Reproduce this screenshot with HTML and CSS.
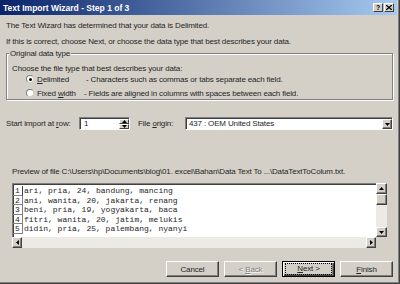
FILE: index.html
```html
<!DOCTYPE html>
<html lang="en">

<head>
    <meta charset="UTF-8">
    <title>Text Import Wizard - Step 1 of 3</title>
    <link rel="stylesheet" href="styles.css">
</head>

<body>
    <div class="window">
        <div class="titlebar">
            <span class="title">Text Import Wizard - Step 1 of 3</span>
            <div class="caption-buttons">
                <span class="caption-btn">?</span>
                <span class="caption-btn">
                    <svg width="6" height="5" viewBox="0 0 6 5"><path d="M0 0 L6 5 M6 0 L0 5" stroke="#000" stroke-width="1.3" /></svg>
                </span>
            </div>
        </div>

        <div class="dialog">
            <p class="intro">The Text Wizard has determined that your data is Delimited.</p>
            <p class="intro second">If this is correct, choose Next, or choose the data type that best describes your data.</p>

            <fieldset class="group">
                <legend>Original data type</legend>
                <p class="group-text">Choose the file type that best describes your data:</p>
                <div class="radio-row">
                    <span class="radio checked"></span>
                    <span class="radio-label"><u>D</u>elimited</span>
                    <span class="radio-desc">- Characters such as commas or tabs separate each field.</span>
                </div>
                <div class="radio-row fixed">
                    <span class="radio"></span>
                    <span class="radio-label">Fixed <u>w</u>idth</span>
                    <span class="radio-desc">- Fields are aligned in columns with spaces between each field.</span>
                </div>
            </fieldset>

            <div class="import-row">
                <span class="row-label">Start import at <u>r</u>ow:</span>
                <div class="spin sunken">
                    <span class="spin-value">1</span>
                    <div class="spin-buttons">
                        <span class="raised mini"><svg width="5" height="3" viewBox="0 0 5 3"><path d="M2.5 0 L5 3 L0 3z" /></svg></span>
                        <span class="raised mini"><svg width="5" height="3" viewBox="0 0 5 3"><path d="M0 0 L5 0 L2.5 3z" /></svg></span>
                    </div>
                </div>
                <span class="origin-label">File <u>o</u>rigin:</span>
                <div class="combo sunken">
                    <span class="combo-value">437 : OEM United States</span>
                    <span class="raised combo-btn"><svg width="5" height="3" viewBox="0 0 5 3"><path d="M0 0 L5 0 L2.5 3z" /></svg></span>
                </div>
            </div>

            <p class="preview-label">Preview of file C:&#92;Users&#92;hp&#92;Documents&#92;blog&#92;01. excel&#92;Bahan&#92;Data Text To ...&#92;DataTextToColum.txt.</p>

            <div class="preview">
                <div class="preview-main">
                    <div class="preview-rows">
                        <div class="prow"><span class="rownum first">1</span><span class="rowtext">ari, pria, 24, bandung, mancing</span></div>
                        <div class="prow"><span class="rownum">2</span><span class="rowtext">ani, wanita, 20, jakarta, renang</span></div>
                        <div class="prow"><span class="rownum">3</span><span class="rowtext">beni, pria, 19, yogyakarta, baca</span></div>
                        <div class="prow"><span class="rownum">4</span><span class="rowtext">fitri, wanita, 20, jatim, melukis</span></div>
                        <div class="prow"><span class="rownum">5</span><span class="rowtext">didin, pria, 25, palembang, nyanyi</span></div>
                    </div>
                    <div class="vscroll">
                        <span class="raised sbtn"><svg width="5" height="3" viewBox="0 0 5 3"><path d="M2.5 0 L5 3 L0 3z" /></svg></span>
                        <span class="raised thumb"></span>
                        <span class="track"></span>
                        <span class="raised sbtn"><svg width="5" height="3" viewBox="0 0 5 3"><path d="M0 0 L5 0 L2.5 3z" /></svg></span>
                    </div>
                </div>
                <div class="hscroll-row">
                    <div class="hscroll">
                        <span class="raised sbtn"><svg width="3" height="5" viewBox="0 0 3 5"><path d="M0 2.5 L3 0 L3 5z" /></svg></span>
                        <span class="track"></span>
                        <span class="raised sbtn"><svg width="3" height="5" viewBox="0 0 3 5"><path d="M0 0 L3 2.5 L0 5z" /></svg></span>
                    </div>
                    <div class="corner"></div>
                </div>
            </div>

            <div class="buttons">
                <button type="button" class="btn">Cancel</button>
                <button type="button" class="btn" disabled>&lt; <u>B</u>ack</button>
                <button type="button" class="btn default"><span class="focus"><u>N</u>ext &gt;</span></button>
                <button type="button" class="btn"><u>F</u>inish</button>
            </div>
        </div>
    </div>
</body>

</html>
```

FILE: styles.css
```css
:root {
    --face-color: #d4d0c8;
    --shadow-color: #808080;
    --dark-color: #404040;
    --light-color: #ffffff;
    --text-color: #262626;
    --track-color: #eceae5;
}

body {
    margin: 0;
    font-family: "Liberation Sans", Arial, sans-serif;
    font-size: 8px;
    letter-spacing: -0.15px;
    color: var(--text-color);
    background: var(--face-color);
}

.window {
    width: 400px;
    height: 284px;
    box-sizing: border-box;
    display: flex;
    flex-direction: column;
    padding: 0 2px 2px 0;
    background: var(--face-color);
    border-right: 1px solid var(--dark-color);
    border-bottom: 1px solid var(--dark-color);
    box-shadow: inset -1px -1px var(--shadow-color);
}

.titlebar {
    height: 15px;
    flex-shrink: 0;
    display: flex;
    align-items: center;
    justify-content: space-between;
    padding: 0 3px;
    background: linear-gradient(to right, #0a246a, #a6caf0);
}

.title {
    color: var(--light-color);
    font-weight: bold;
    font-size: 8.5px;
    letter-spacing: 0;
}

.caption-buttons {
    display: flex;
    gap: 1px;
}

.caption-btn {
    width: 10px;
    height: 9px;
    box-sizing: border-box;
    display: flex;
    align-items: center;
    justify-content: center;
    background: var(--face-color);
    border: 1px solid;
    border-color: var(--light-color) var(--dark-color) var(--dark-color) var(--light-color);
    font-weight: bold;
    font-size: 7px;
    line-height: 7px;
    color: #000;
}

.dialog {
    flex: 1;
    padding: 5px 4px 0 6px;
}

.intro {
    margin: 0;
    line-height: 11px;
}

.intro.second {
    margin-top: 5px;
}

/* group box */

.group {
    margin: 1px 0 0;
    padding: 5px 0 1px 5px;
    border: 1px solid var(--shadow-color);
    box-shadow: inset 1px 1px var(--light-color), 1px 1px var(--light-color);
}

.group legend {
    margin-left: -3px;
    padding: 0 1px;
    line-height: 11px;
    background: var(--face-color);
}

.group-text {
    margin: 0;
    line-height: 10px;
}

.radio-row {
    display: flex;
    align-items: center;
    height: 10px;
    margin-left: 14px;
}

.radio-row.fixed {
    margin-top: 4px;
}

.radio {
    width: 8px;
    height: 8px;
    box-sizing: border-box;
    display: flex;
    align-items: center;
    justify-content: center;
    border-radius: 50%;
    background: var(--light-color);
    border: 1px solid;
    border-color: var(--shadow-color) var(--face-color) var(--face-color) var(--shadow-color);
}

.radio.checked::after {
    content: "";
    width: 3px;
    height: 3px;
    border-radius: 50%;
    background: #000;
}

.radio-label {
    width: 49px;
    margin-left: 3px;
}

.fixed .radio-label {
    width: 47px;
}

/* start row / origin */

.import-row {
    display: flex;
    align-items: center;
    height: 13px;
    margin-top: 17px;
}

.row-label {
    width: 73px;
}

.sunken {
    height: 13px;
    box-sizing: border-box;
    display: flex;
    align-items: center;
    justify-content: space-between;
    background: var(--light-color);
    border: 1px solid;
    border-color: var(--shadow-color) var(--light-color) var(--light-color) var(--shadow-color);
    box-shadow: inset 1px 1px var(--dark-color);
}

.raised {
    box-sizing: border-box;
    display: flex;
    align-items: center;
    justify-content: center;
    background: var(--face-color);
    border: 1px solid;
    border-color: var(--light-color) var(--dark-color) var(--dark-color) var(--light-color);
    box-shadow: inset -1px -1px var(--shadow-color);
}

.spin {
    width: 51px;
    padding-left: 4px;
}

.spin-buttons {
    display: flex;
    flex-direction: column;
    align-self: stretch;
    width: 10px;
    padding-top: 1px;
}

.mini {
    flex: 1;
    box-shadow: none;
}

.raised svg {
    display: block;
}

.origin-label {
    width: 47px;
    margin-left: 8px;
}

.combo {
    flex: 1;
    padding-left: 3px;
}

.combo-btn {
    width: 10px;
    align-self: stretch;
    margin-top: 1px;
}

/* preview */

.preview-label {
    margin: 36px 0 0 6px;
    line-height: 11px;
}

.preview {
    width: 375px;
    margin: 6px 0 0 6px;
}

.preview-main {
    display: flex;
    height: 54px;
}

.preview-rows {
    flex: 1;
    padding-top: 2px;
    background: var(--light-color);
    border-top: 1px solid var(--shadow-color);
    border-left: 1px solid var(--shadow-color);
    box-shadow: inset 1px 1px var(--dark-color);
}

.prow {
    display: flex;
    height: 9.5px;
    line-height: 9.5px;
    font-family: "Liberation Mono", "Courier New", monospace;
    font-size: 8px;
    letter-spacing: 0;
}

.rownum {
    width: 10px;
    box-sizing: border-box;
    text-align: center;
    border-right: 1px solid var(--shadow-color);
    border-bottom: 1px solid var(--shadow-color);
}

.rownum.first {
    border-right-color: var(--dark-color);
}

.rowtext {
    padding-left: 1px;
    white-space: pre;
}

.vscroll {
    width: 11px;
    display: flex;
    flex-direction: column;
    background: var(--track-color);
}

.sbtn {
    width: 11px;
    height: 11px;
    flex-shrink: 0;
}

.vscroll .sbtn:last-child {
    height: 10px;
}

.thumb {
    height: 11px;
    flex-shrink: 0;
}

.track {
    flex: 1;
}

.hscroll-row {
    display: flex;
    height: 11px;
}

.hscroll {
    flex: 1;
    display: flex;
    background: var(--track-color);
}

.hscroll .sbtn {
    width: 10px;
}

.corner {
    width: 11px;
}

/* dialog buttons */

.buttons {
    display: flex;
    justify-content: flex-end;
    gap: 5px;
    margin-top: 13px;
}

.btn {
    width: 53px;
    height: 16px;
    padding: 0;
    font: inherit;
    letter-spacing: inherit;
    color: var(--text-color);
    background: var(--face-color);
    border: 1px solid;
    border-color: var(--light-color) var(--dark-color) var(--dark-color) var(--light-color);
    box-shadow: inset -1px -1px var(--shadow-color);
}

.btn:disabled {
    color: var(--shadow-color);
    text-shadow: 1px 1px var(--light-color);
}

.btn.default {
    border-color: #000;
    box-shadow: inset 1px 1px var(--light-color), inset -1px -1px var(--dark-color), inset -2px -2px var(--shadow-color);
}

.focus {
    display: block;
    margin: 0 2px;
    line-height: 10px;
    border: 1px dotted #000;
}
```
